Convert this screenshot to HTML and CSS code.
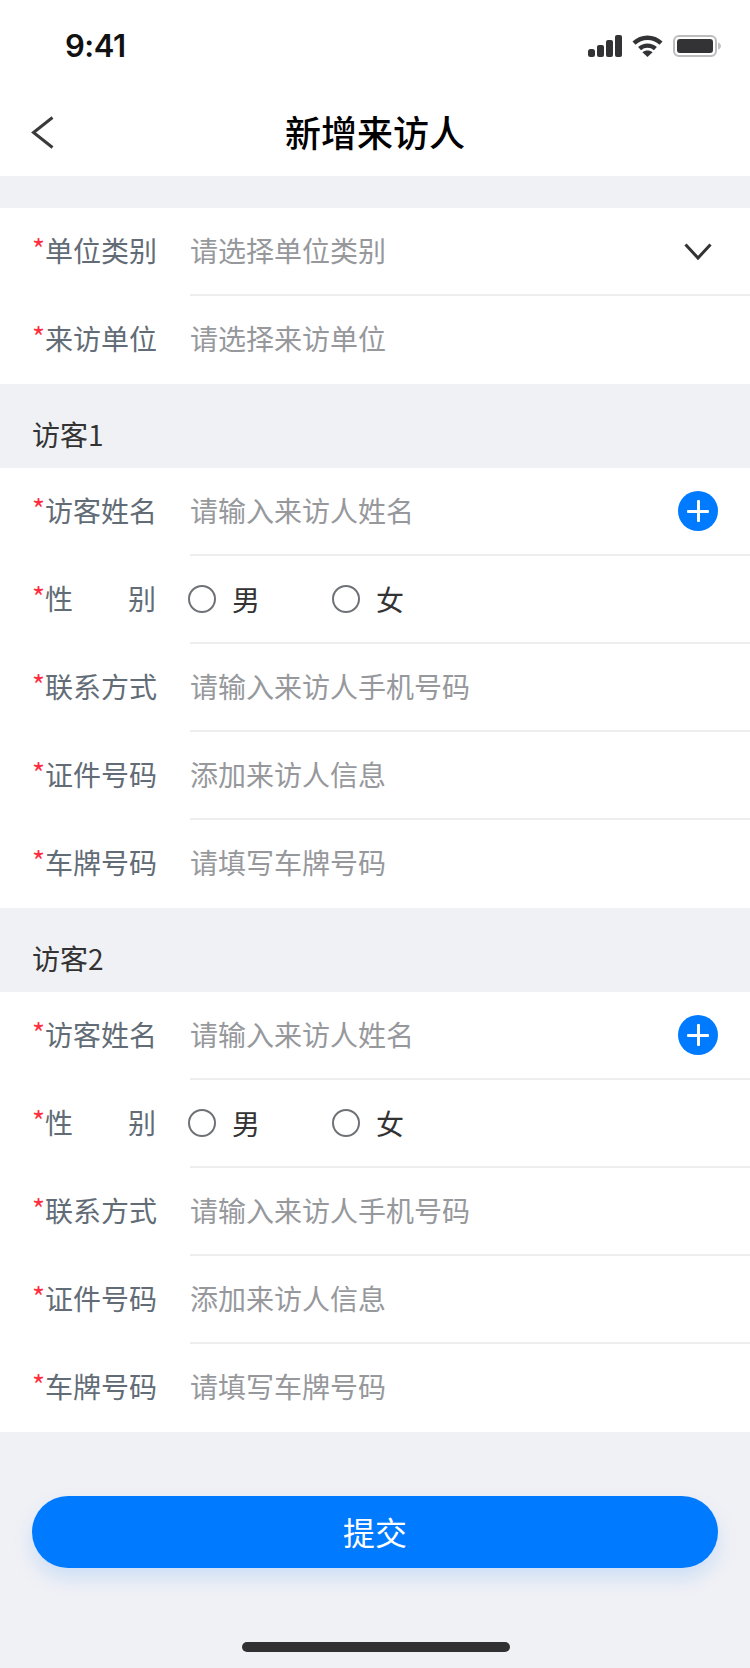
FILE: index.html
```html
<!DOCTYPE html>
<html lang="zh-CN">
<head>
    <meta charset="UTF-8">
    <meta name="viewport" content="width=device-width, initial-scale=1.0">
    <title>新增来访人</title>
    <link rel="stylesheet" href="styles.css">
</head>
<body>
    <div class="status-bar">
        <span class="time">9:41</span>
        <div class="status-icons">
            <svg width="34" height="22" viewBox="0 0 34 22" fill="#333336">
                <rect x="0" y="14" width="7" height="8" rx="2.5"/>
                <rect x="9" y="10" width="7" height="12" rx="2"/>
                <rect x="18" y="5" width="7" height="17" rx="2"/>
                <rect x="27" y="0" width="7" height="22" rx="2"/>
            </svg>
            <svg width="31" height="22" viewBox="0 0 31 22" fill="none" stroke="#333336" stroke-width="4.4">
                <path d="M2 8.2C9.6 1 21.4 1 29 8.2"/>
                <path d="M7.6 13.6C12 9.6 19 9.6 23.4 13.6"/>
                <path d="M15.5 22L10.4 17.2C13.2 14.8 17.8 14.8 20.6 17.2Z" fill="#333336" stroke="none"/>
            </svg>
            <svg width="48" height="22" viewBox="0 0 48 22" fill="none">
                <rect x="1" y="1" width="42" height="20" rx="5" stroke="#bdbdbd" stroke-width="2"/>
                <rect x="4" y="4" width="36" height="14" rx="3" fill="#333336"/>
                <path d="M45 7.5C47 8 48 9.500 48 11C48 12.500 47 14 45 14.500Z" fill="#c4c4c4"/>
            </svg>
        </div>
    </div>

    <div class="nav-bar">
        <svg class="back" width="23" height="33" viewBox="0 0 23 33" fill="none" stroke="#3a3a3c" stroke-width="3">
            <path d="M21.500 1.500L2.500 16.500L21.500 31.500"/>
        </svg>
        <h1>新增来访人</h1>
    </div>

    <div class="gap"></div>

    <div class="section">
        <div class="row">
            <div class="label"><i>*</i><span class="label-text">单位类别</span></div>
            <div class="value">
                <span class="placeholder">请选择单位类别</span>
                <svg class="arrow" width="28" height="18" viewBox="0 0 28 18" fill="none" stroke="#333" stroke-width="3">
                    <path d="M1.500 1.500L14 15L26.500 1.500"/>
                </svg>
            </div>
        </div>
        <div class="row">
            <div class="label"><i>*</i><span class="label-text">来访单位</span></div>
            <div class="value"><span class="placeholder">请选择来访单位</span></div>
        </div>
    </div>

    <div class="group-title">访客1</div>
    <div class="section">
        <div class="row">
            <div class="label"><i>*</i><span class="label-text">访客姓名</span></div>
            <div class="value">
                <span class="placeholder">请输入来访人姓名</span>
                <span class="add-btn"></span>
            </div>
        </div>
        <div class="row">
            <div class="label"><i>*</i><span class="label-text spread"><span>性</span><span>别</span></span></div>
            <div class="value radios">
                <label class="radio"><span class="dot"></span>男</label>
                <label class="radio"><span class="dot"></span>女</label>
            </div>
        </div>
        <div class="row">
            <div class="label"><i>*</i><span class="label-text">联系方式</span></div>
            <div class="value"><span class="placeholder">请输入来访人手机号码</span></div>
        </div>
        <div class="row">
            <div class="label"><i>*</i><span class="label-text">证件号码</span></div>
            <div class="value"><span class="placeholder">添加来访人信息</span></div>
        </div>
        <div class="row">
            <div class="label"><i>*</i><span class="label-text">车牌号码</span></div>
            <div class="value"><span class="placeholder">请填写车牌号码</span></div>
        </div>
    </div>

    <div class="group-title">访客2</div>
    <div class="section">
        <div class="row">
            <div class="label"><i>*</i><span class="label-text">访客姓名</span></div>
            <div class="value">
                <span class="placeholder">请输入来访人姓名</span>
                <span class="add-btn"></span>
            </div>
        </div>
        <div class="row">
            <div class="label"><i>*</i><span class="label-text spread"><span>性</span><span>别</span></span></div>
            <div class="value radios">
                <label class="radio"><span class="dot"></span>男</label>
                <label class="radio"><span class="dot"></span>女</label>
            </div>
        </div>
        <div class="row">
            <div class="label"><i>*</i><span class="label-text">联系方式</span></div>
            <div class="value"><span class="placeholder">请输入来访人手机号码</span></div>
        </div>
        <div class="row">
            <div class="label"><i>*</i><span class="label-text">证件号码</span></div>
            <div class="value"><span class="placeholder">添加来访人信息</span></div>
        </div>
        <div class="row">
            <div class="label"><i>*</i><span class="label-text">车牌号码</span></div>
            <div class="value"><span class="placeholder">请填写车牌号码</span></div>
        </div>
    </div>

    <button class="btn">提交</button>
    <div class="home-bar"></div>
</body>
</html>
```

FILE: styles.css
```css
html, body {
    height: 1668px;
    overflow: hidden;
}
body {
    font-family: "Noto Sans CJK SC", "Noto Sans", sans-serif;
    margin: 0;
    padding: 0;
    background-color: #f0f1f5;
    color: #333;
    font-size: 28px;
}
.status-bar {
    height: 88px;
    background: white;
    display: flex;
    align-items: center;
    justify-content: space-between;
    padding: 3px 29px 0 65px;
    box-sizing: border-box;
}
.time {
    font-family: Inter, sans-serif;
    font-size: 31px;
    font-weight: 600;
    color: #111;
    letter-spacing: -0.5px;
}
.status-icons {
    display: flex;
    align-items: center;
    gap: 10px;
}
.nav-bar {
    height: 88px;
    background: white;
    position: relative;
    display: flex;
    align-items: center;
    justify-content: center;
    padding-bottom: 2px;
    box-sizing: border-box;
}
.nav-bar h1 {
    margin: 0;
    font-size: 36px;
    font-weight: 500;
    color: #000;
}
.back {
    position: absolute;
    left: 31px;
    top: 28px;
}
.gap {
    height: 32px;
}
.section {
    background: white;
}
.row {
    display: flex;
    height: 88px;
}
.label {
    width: 190px;
    flex-shrink: 0;
    padding: 0 0 4px 32px;
    box-sizing: border-box;
    display: flex;
    align-items: center;
    color: #626c76;
    white-space: nowrap;
}
.label i {
    width: 13px;
    padding-bottom: 5px;
    font-style: normal;
    color: #ff2d3f;
}
.label-text {
    width: 111px;
}
.spread {
    display: flex;
    justify-content: space-between;
}
.value {
    flex: 1;
    display: flex;
    align-items: center;
    justify-content: space-between;
    border-bottom: 2px solid #eeeeee;
    padding-right: 32px;
}
.row:last-child .value {
    border-bottom: none;
    padding-bottom: 2px;
}
.placeholder {
    padding-bottom: 2px;
    color: #96989c;
}
.arrow {
    margin: 2px 6px 0 0;
}
.add-btn {
    width: 40px;
    height: 40px;
    border-radius: 50%;
    background: #007aff;
    position: relative;
}
.add-btn::before, .add-btn::after {
    content: "";
    position: absolute;
    background: white;
    border-radius: 1px;
}
.add-btn::before {
    left: 9px;
    right: 9px;
    top: 19px;
    height: 3px;
}
.add-btn::after {
    top: 9px;
    bottom: 9px;
    left: 19px;
    width: 3px;
}
.radios {
    justify-content: flex-start;
    gap: 56px;
}
.radio {
    display: flex;
    align-items: center;
    gap: 16px;
    margin-left: -2px;
    width: 90px;
    color: #333;
}
.dot {
    width: 28px;
    height: 28px;
    border: 2px solid #6e7276;
    border-radius: 50%;
    box-sizing: border-box;
}
.group-title {
    height: 84px;
    display: flex;
    align-items: flex-end;
    padding: 0 0 14px 32px;
    box-sizing: border-box;
    line-height: 40px;
    color: #333;
}
.btn {
    display: block;
    width: 686px;
    height: 72px;
    margin: 64px 32px 0;
    padding: 0 0 3px;
    background-color: #007aff;
    color: white;
    font-family: inherit;
    font-size: 32px;
    border: none;
    border-radius: 36px;
    box-shadow: 0 10px 20px rgba(0,122,255,0.15);
}
.home-bar {
    width: 268px;
    height: 10px;
    margin: 74px 240px 0 242px;
    border-radius: 5px;
    background: #313134;
}
```
